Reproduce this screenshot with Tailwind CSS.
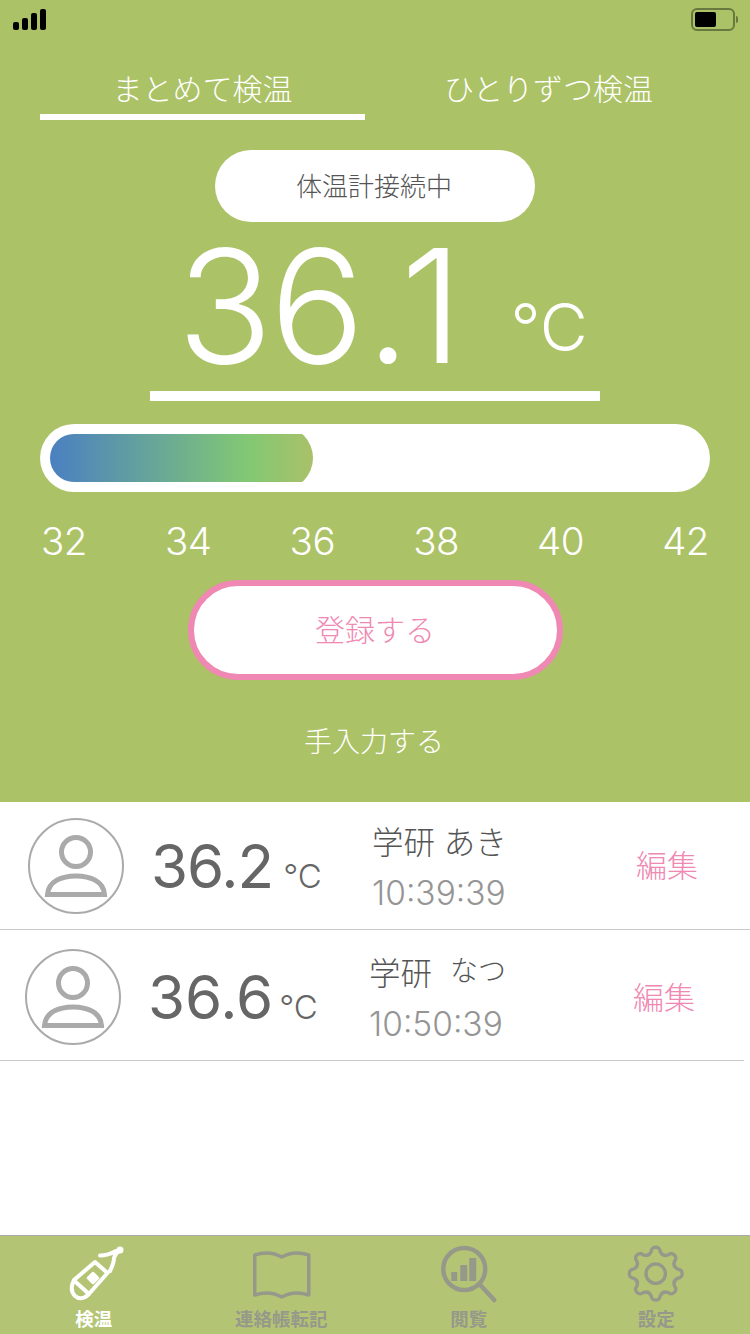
<!DOCTYPE html>
<html lang="ja">
<head>
<meta charset="utf-8">
<script src="https://cdn.jsdelivr.net/npm/@tailwindcss/browser@4"></script>
</head>
<body class="m-0 bg-white font-['Liberation_Sans','Noto_Sans_CJK_JP',sans-serif]">
<div class="flex h-[1334px] w-[750px] flex-col overflow-hidden">
  <!-- Green header -->
  <section class="flex h-[802px] flex-col bg-[#acc267] text-white">
    <div class="flex h-[38px] items-start justify-between pl-[13px] pr-[12px] pt-[8px]">
      <div class="flex h-[22px] items-end gap-[3px]">
        <span class="h-[8px] w-[6px] rounded-[2px] bg-black"></span>
        <span class="h-[12px] w-[6px] rounded-[2px] bg-black"></span>
        <span class="h-[17px] w-[6px] rounded-[2px] bg-black"></span>
        <span class="h-[21px] w-[6px] rounded-[2px] bg-black"></span>
      </div>
      <div class="flex items-center gap-[1px]">
        <div class="flex h-[23px] w-[44px] items-center rounded-[6px] border-2 border-[#69783f] pl-[2px]">
          <span class="h-[15px] w-[21px] rounded-[2px] bg-black"></span>
        </div>
        <span class="h-[7px] w-[2px] rounded-r-[2px] bg-[#69783f]"></span>
      </div>
    </div>

    <div class="flex h-[82px] pl-[40px] text-[30px] font-light">
      <div class="flex w-[325px] shrink-0 items-center justify-center border-b-[6px] border-white pt-[28px] leading-none">まとめて検温</div>
      <div class="flex w-[367px] shrink-0 items-center justify-center pt-[22px] leading-none">ひとりずつ検温</div>
    </div>

    <div class="mt-[30px] flex h-[72px] w-[320px] items-center justify-center self-center rounded-[36px] bg-white pr-[2px] pt-[2px] text-[26px] font-light leading-none text-[#555]">体温計接続中</div>

    <div class="flex h-[179px] w-[450px] items-end self-center border-b-[10px] border-white">
      <div class="ml-[27px] flex items-baseline font-['Inter',sans-serif] leading-none">
        <span class="mb-[20px] text-[158px] font-[350] leading-[130px] tracking-[-3px]">36<span class="ml-[4px] tracking-[-10px]">.</span>1</span>
        <span class="ml-[51px] -translate-y-[12px] text-[66px] font-light leading-none">°C</span>
      </div>
    </div>

    <div class="mx-[40px] mt-[23px] h-[68px] rounded-[34px] bg-white p-[10px]">
      <div class="h-[48px] w-[263px] overflow-hidden rounded-l-[24px]">
        <div class="-mt-[8px] h-[64px] w-full rounded-r-[32px] bg-[linear-gradient(90deg,#4a80c1_0%,#82c874_75%,#a9c169_100%)]"></div>
      </div>
    </div>

    <div class="mt-[25px] flex justify-between px-[41px] font-['Inter',sans-serif] text-[38.5px] font-[350] leading-[48px] tracking-[-0.5px]">
      <span>32</span><span>34</span><span>36</span><span>38</span><span>40</span><span>42</span>
    </div>

    <div class="mt-[15px] flex h-[100px] w-[375px] items-center justify-center self-center rounded-[50px] border-[6px] border-[#ef88b2] bg-white pt-[2px] text-[30px] font-light leading-none text-[#ef88b2]">登録する</div>

    <div class="mt-[49px] pr-[2px] text-center text-[28px] font-light leading-[28px]">手入力する</div>
  </section>

  <!-- Record rows -->
  <div class="flex h-[128px] w-[750px] items-center border-b border-[#c8c8c8] pl-[28px]">
    <svg class="h-[96px] w-[96px] shrink-0" viewBox="0 0 96 96" fill="none" stroke="#aaaaaa">
      <circle cx="48" cy="48" r="47" stroke-width="2"/>
      <circle cx="48" cy="34" r="14.5" stroke-width="5"/>
      <path d="M19.5 76.5C20.5 63 34 58 48 58C62 58 75.5 63 76.5 76.5Z" stroke-width="5"/>
    </svg>
    <div class="ml-[27px] flex w-[221px] items-baseline font-['Inter',sans-serif] text-[#666]">
      <span class="text-[60px] leading-none tracking-[-1px]">36.2</span>
      <span class="ml-[10px] text-[33px] font-light leading-none">°C</span>
    </div>
    <div class="w-[264px] pt-[4px]">
      <div class="text-[31.5px] font-light leading-[40px] text-[#555]">学研 あき</div>
      <div class="mt-[10px] font-['Inter',sans-serif] text-[33.5px] font-[350] leading-[40px] text-[#959595]">10:39:39</div>
    </div>
    <span class="mt-[1px] text-[31px] font-light leading-none text-[#ef88b2]">編集</span>
  </div>

  <div class="flex h-[131px] w-[744px] items-center border-b border-[#c8c8c8] pl-[25px] pt-[4px]">
    <svg class="h-[96px] w-[96px] shrink-0" viewBox="0 0 96 96" fill="none" stroke="#aaaaaa">
      <circle cx="48" cy="48" r="47" stroke-width="2"/>
      <circle cx="48" cy="34" r="14.5" stroke-width="5"/>
      <path d="M19.5 76.5C20.5 63 34 58 48 58C62 58 75.5 63 76.5 76.5Z" stroke-width="5"/>
    </svg>
    <div class="ml-[27px] flex w-[221px] items-baseline font-['Inter',sans-serif] text-[#666]">
      <span class="text-[60px] leading-none">36.6</span>
      <span class="ml-[6px] text-[33px] font-light leading-none">°C</span>
    </div>
    <div class="w-[264px] pt-[4px]">
      <div class="flex items-start text-[31.5px] font-light leading-[40px] text-[#555]">学研<span class="ml-[18px] text-[28px] leading-[36px]">なつ</span></div>
      <div class="mt-[10px] font-['Inter',sans-serif] text-[33.5px] font-[350] leading-[40px] text-[#959595]">10:50:39</div>
    </div>
    <span class="mt-[2px] text-[31px] font-light leading-none text-[#ef88b2]">編集</span>
  </div>

  <div class="flex-1"></div>

  <!-- Bottom tab bar -->
  <nav class="grid h-[99px] grid-cols-4 border-t border-[#aaaaaa] bg-[#b3c575] pt-[9px] text-[18.5px] font-bold leading-[20px] text-[#96998a]">
    <div class="flex flex-col items-center text-white">
      <svg class="mb-[5px] h-[60px] w-[60px]" viewBox="0 0 60 60" fill="none" stroke="#fff" stroke-width="4" stroke-linecap="round" stroke-linejoin="round">
        <path d="M31 17L43.5 28L24 50Q17 56 11 51Q5 45 10 35Z"/>
        <path d="M10.5 36L25 49"/>
        <path d="M36 10.5Q44 10.5 52 6M46 26Q50 18 50 13Q51 9 55 6"/>
        <circle cx="56" cy="5" r="3.5" fill="#fff" stroke="none"/>
        <path d="M29 28L34 33L29 38L24 33Z" fill="#fff" stroke="#fff" stroke-width="2.5"/>
      </svg>
      <span>検温</span>
    </div>
    <div class="flex flex-col items-center">
      <svg class="mb-[5px] h-[60px] w-[60px]" viewBox="0 0 60 60" fill="none" stroke="#96998a" stroke-width="3.5" stroke-linejoin="round">
        <path transform="translate(1.75 0)" d="M2 10Q17 5 29 12Q41 5 56 10V50Q41 45 29 52Q17 45 2 50Z"/>
      </svg>
      <span>連絡帳転記</span>
    </div>
    <div class="flex flex-col items-center">
      <svg class="mb-[5px] h-[60px] w-[60px]" viewBox="0 0 60 60" fill="none" stroke="#96998a">
        <g transform="translate(-1.75 0)">
          <circle cx="27" cy="24" r="21" stroke-width="4.5"/>
          <path d="M43 40L57 55" stroke-width="4.5" stroke-linecap="round"/>
          <path d="M14 27H20V36H14ZM23 20H30V36H23ZM32 13H39V36H32Z" fill="#96998a" stroke="none"/>
        </g>
      </svg>
      <span>閲覧</span>
    </div>
    <div class="flex flex-col items-center">
      <svg class="mb-[5px] h-[60px] w-[60px]" viewBox="0 0 60 60" fill="none" stroke="#96998a" stroke-width="3.5">
        <g transform="translate(0.6 -0.4) scale(0.97)">
          <path d="M25.42 6.95C25.46 1.36 34.54 1.36 34.58 6.95Q37.08 12.91 43.06 10.46C47.05 6.54 53.46 12.95 49.54 16.94Q47.09 22.92 53.05 25.42C58.64 25.46 58.64 34.54 53.05 34.58Q47.09 37.08 49.54 43.06C53.46 47.05 47.05 53.46 43.06 49.54Q37.08 47.09 34.58 53.05C34.54 58.64 25.46 58.64 25.42 53.05Q22.92 47.09 16.94 49.54C12.95 53.46 6.54 47.05 10.46 43.06Q12.91 37.08 6.95 34.58C1.36 34.54 1.36 25.46 6.95 25.42Q12.91 22.92 10.46 16.94C6.54 12.95 12.95 6.54 16.94 10.46Q22.92 12.91 25.42 6.95Z"/>
          <circle cx="30" cy="30" r="10"/>
        </g>
      </svg>
      <span>設定</span>
    </div>
  </nav>
</div>
</body>
</html>
